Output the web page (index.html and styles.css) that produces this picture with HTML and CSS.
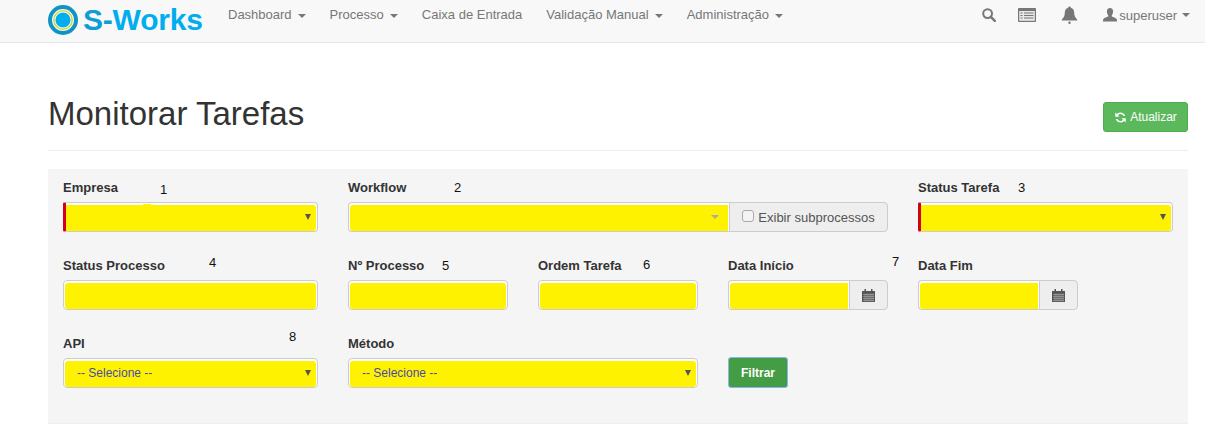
FILE: index.html
```html
<!DOCTYPE html>
<html lang="pt">
<head>
<meta charset="utf-8">
<title>Monitorar Tarefas</title>
<link rel="stylesheet" href="styles.css">
</head>
<body>
<nav class="navbar">
  <a class="brand">
    <svg class="brand-mark" width="30" height="30" viewBox="0 0 30 30"><circle cx="15" cy="15" r="13" fill="none" stroke="#0f94c4" stroke-width="4"/><circle cx="15" cy="15" r="10.2" fill="#fff"/><circle cx="15" cy="15" r="9.2" fill="none" stroke="#d5d83a" stroke-width="1.6"/><circle cx="15" cy="15" r="7.6" fill="#00aeef"/></svg>
    <span class="brand-text"><span class="brand-dark">S-</span>Works</span>
  </a>
  <ul class="nav-left">
    <li>Dashboard<span class="caret"></span></li>
    <li>Processo<span class="caret"></span></li>
    <li>Caixa de Entrada</li>
    <li>Validação Manual<span class="caret"></span></li>
    <li>Administração<span class="caret"></span></li>
  </ul>
  <ul class="nav-right">
    <li><svg width="14" height="14" viewBox="0 0 14 14"><circle cx="5.6" cy="5.6" r="4.4" fill="none" stroke="#777" stroke-width="2"/><path d="M8.8 8.8l4 4" stroke="#777" stroke-width="2.4" stroke-linecap="round"/></svg></li>
    <li><svg width="18" height="14" viewBox="0 0 18 14"><rect width="18" height="14" rx="1" fill="#777"/><rect x="1.2" y="3" width="15.6" height="9.8" fill="#e8e8e8"/><path d="M2.5 5h2M2.5 7.5h2M2.5 10h2M6 5h9.5M6 7.5h9.5M6 10h9.5" stroke="#777" stroke-width="1.2"/></svg></li>
    <li><svg width="17" height="18" viewBox="0 0 17 18"><path d="M8.5 0.5c.9 0 1.3.6 1.3 1.3 2.4.6 3.4 2.7 3.4 5 0 3 1 4.600 3 6.700v1H.8v-1c2-2.100 3-3.700 3-6.700 0-2.300 1-4.400 3.400-5 0-.7.400-1.300 1.300-1.300z" fill="#777"/><circle cx="8.500" cy="16.700" r="1.200" fill="#777"/></svg></li>
    <li class="user"><svg width="14" height="14" viewBox="0 0 14 14"><path d="M7 0c2 0 3.100 1.500 3.100 3.500 0 1.500-.6 3-1.300 3.800v1.200c1.600.8 5.200 1.400 5.200 3.700v1.300H0v-1.300c0-2.300 3.600-2.900 5.200-3.700V7.300C4.500 6.500 3.900 5 3.900 3.500 3.900 1.500 5 0 7 0z" fill="#777"/></svg>superuser<span class="caret"></span></li>
  </ul>
</nav>

<main class="page">
  <header class="page-header">
    <h1>Monitorar Tarefas</h1>
    <button class="btn-refresh"><svg width="13" height="13" viewBox="0 0 13 13"><path d="M11.200 5A5 5 0 0 0 2.800 3.100L1.300 1.600v4.200h4.200L3.900 4.200a3.400 3.400 0 0 1 5.700.8zM1.800 8a5 5 0 0 0 8.400 1.900l1.500 1.500V7.200H7.500l1.600 1.600a3.400 3.400 0 0 1-5.700-.8z" fill="#fff"/></svg>Atualizar</button>
  </header>

  <form class="filters">
    <span class="mark m1">1</span><span class="mark m2">2</span><span class="mark m3">3</span><span class="mark m4">4</span>
    <span class="mark m5">5</span><span class="mark m6">6</span><span class="mark m7">7</span><span class="mark m8">8</span>

    <div class="field">
      <label>Empresa</label>
      <div class="control required"><span class="fill"></span><span class="bump"></span><span class="arrow"></span></div>
    </div>
    <div class="field span3">
      <label>Workflow</label>
      <div class="group">
        <div class="control"><span class="fill"></span><span class="arrow muted"></span></div>
        <div class="addon addon-check"><span class="check"></span>Exibir subprocessos</div>
      </div>
    </div>
    <div class="field">
      <label>Status Tarefa</label>
      <div class="control required"><span class="fill"></span><span class="arrow"></span></div>
    </div>

    <div class="field">
      <label>Status Processo</label>
      <div class="control"><span class="fill"></span></div>
    </div>
    <div class="field">
      <label>Nº Processo</label>
      <div class="control"><span class="fill"></span></div>
    </div>
    <div class="field">
      <label>Ordem Tarefa</label>
      <div class="control"><span class="fill"></span></div>
    </div>
    <div class="field">
      <label>Data Início</label>
      <div class="group">
        <div class="control"><span class="fill"></span></div>
        <div class="addon addon-date"><svg width="13" height="13" viewBox="0 0 13 13"><path d="M0 2h13v11H0z" fill="#555"/><path d="M2.500 0h1.500v2.500H2.500zM9 0h1.500v2.500H9z" fill="#555"/><path d="M1 5.500h11M1 7.500h11M1 9.500h11M1 11.500h11M3 4.500v8M5 4.500v8M7 4.500v8M9 4.500v8M11 4.500v8" stroke="#bbb" stroke-width=".5"/></svg></div>
      </div>
    </div>
    <div class="field">
      <label>Data Fim</label>
      <div class="group narrow">
        <div class="control"><span class="fill"></span></div>
        <div class="addon addon-date"><svg width="13" height="13" viewBox="0 0 13 13"><path d="M0 2h13v11H0z" fill="#555"/><path d="M2.500 0h1.500v2.500H2.500zM9 0h1.500v2.500H9z" fill="#555"/><path d="M1 5.500h11M1 7.500h11M1 9.500h11M1 11.500h11M3 4.500v8M5 4.500v8M7 4.500v8M9 4.500v8M11 4.500v8" stroke="#bbb" stroke-width=".5"/></svg></div>
      </div>
    </div>

    <div class="field">
      <label>API</label>
      <div class="control"><span class="fill text">-- Selecione --</span><span class="arrow"></span></div>
    </div>
    <div class="field span2">
      <label>Método</label>
      <div class="control"><span class="fill text">-- Selecione --</span><span class="arrow"></span></div>
    </div>
    <div class="field action">
      <button class="btn-filter" type="button">Filtrar</button>
    </div>
  </form>
</main>
</body>
</html>
```
FILE: styles.css
```css
* { box-sizing: border-box; }
html, body { margin: 0; padding: 0; height: 430px; overflow: hidden; background: #fff; }
body { font-family: "Liberation Sans", Arial, sans-serif; font-size: 13px; color: #333; }

.navbar { height: 43px; background: #f8f8f8; border-bottom: 1px solid #e7e7e7; display: flex; align-items: flex-start; padding-left: 48px; padding-right: 15px; }
.brand { display: flex; align-items: center; gap: 5px; height: 40px; width: 180px; flex: none; }
.brand-mark { flex: none; }
.brand-text { font-size: 30px; font-weight: bold; color: #00aeef; letter-spacing: -0.2px; }
.brand-dark { color: #0f9ed4; }
.nav-left, .nav-right { list-style: none; margin: 0; padding: 0; display: flex; color: #777; }
.nav-left { gap: 24px; line-height: 30px; font-size: 13px; }
.nav-right { margin-left: auto; align-items: center; height: 30px; font-size: 13px; }
.nav-right li { display: flex; align-items: center; }
.nav-right li:nth-child(1) { margin-right: 22px; }
.nav-right li:nth-child(2) { margin-right: 25px; }
.nav-right li:nth-child(3) { margin-right: 25px; }
.nav-right svg { display: block; }
.user svg { margin-right: 2px; }
.caret { display: inline-block; width: 0; height: 0; margin-left: 6px; vertical-align: middle; border-top: 4px solid #777; border-left: 4px solid transparent; border-right: 4px solid transparent; }
.user .caret { margin-left: 5px; }

.page { padding: 0 17px 0 48px; }
.page-header { height: 108px; padding-top: 50px; border-bottom: 1px solid #eee; display: flex; justify-content: space-between; align-items: flex-start; }
h1 { margin: 0; font-size: 33px; font-weight: 400; line-height: 42px; color: #333; }
.btn-refresh { margin-top: 9px; width: 85px; height: 30px; padding: 0; border: 1px solid #4cae4c; border-radius: 3px; background: #5cb85c; color: #fff; font: 12px "Liberation Sans", Arial, sans-serif; display: flex; align-items: center; justify-content: center; gap: 3px; }

.filters { position: relative; margin-top: 18px; height: 255px; background: #f5f5f5; border-bottom: 1px solid #eee; padding: 8px 15px 0; display: grid; grid-template-columns: 255px 160px 160px 160px 255px; column-gap: 30px; row-gap: 23px; grid-template-rows: 55px 55px 55px; align-content: start; }
.field { display: flex; flex-direction: column; min-width: 0; }
.span2 { grid-column: span 2; }
.span3 { grid-column: span 3; }
label { display: block; height: 20px; margin-bottom: 5px; padding-top: 1px; font-size: 13px; line-height: 20px; font-weight: bold; color: #333; }

.control { position: relative; display: block; flex: 1 1 auto; height: 30px; border: 1px solid #ccc; border-radius: 4px; background: #fff; padding: 2px 1px 0 1px; min-width: 0; }
.fill { display: block; height: 100%; background: #fff200; border-radius: 3px; }
.fill.text { padding-left: 12px; font-size: 12px; line-height: 25px; color: #4a4ab4; }
.required { border-left: 3px solid #d0021b; padding-left: 0; border-top-left-radius: 2px; border-bottom-left-radius: 2px; }
.required .fill { border-radius: 0 3px 3px 0; }
.bump { position: absolute; left: 77px; top: 1px; width: 8px; height: 2px; background: #fff200; }
.arrow { position: absolute; right: 6px; top: 11px; width: 0; height: 0; border-top: 6px solid #555; border-left: 3px solid transparent; border-right: 3px solid transparent; }
.arrow.muted { border-top-color: #aaa; right: 10px; border-top-width: 4px; border-left-width: 4px; border-right-width: 4px; top: 12px; }

.group { display: flex; height: 30px; }
.group .control { border-right: 0; border-radius: 4px 0 0 4px; }
.group .fill { border-radius: 3px 0 0 3px; }
.group.narrow { width: 160px; }
.addon { flex: none; display: flex; align-items: center; justify-content: center; height: 30px; background: #eee; border: 1px solid #ccc; border-radius: 0 4px 4px 0; color: #555; }
.addon-check { width: 159px; font-size: 13px; gap: 4px; }
.addon-date { width: 39px; }
.check { width: 12px; height: 12px; border: 1px solid #aaa; border-radius: 3px; background: #f4f4f4; margin-bottom: 2px; }

.action { padding-top: 24px; }
.btn-filter { width: 60px; height: 33px; padding: 0; border: 1px solid #8ab4ee; border-radius: 3px; background: #449d44; color: #fff; font: bold 12px "Liberation Sans", Arial, sans-serif; }

.mark { position: absolute; font-size: 13px; line-height: 14px; color: #111; }
.m1 { left: 112px; top: 14px; }
.m2 { left: 406px; top: 12px; }
.m3 { left: 970px; top: 12px; }
.m4 { left: 161px; top: 87px; }
.m5 { left: 394px; top: 90px; }
.m6 { left: 595px; top: 89px; }
.m7 { left: 844px; top: 86px; }
.m8 { left: 241px; top: 161px; }
```
